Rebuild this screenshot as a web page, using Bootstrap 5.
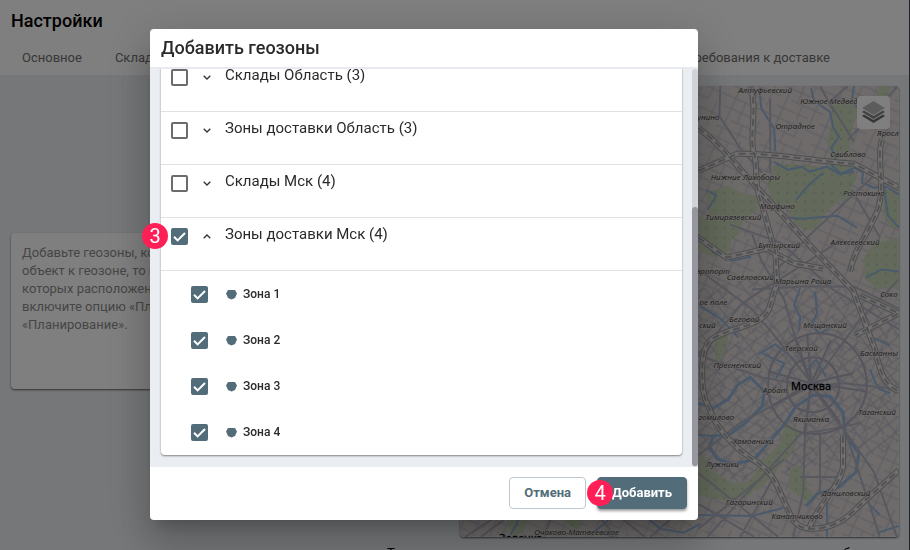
<!DOCTYPE html>
<html lang="ru">
<head>
<meta charset="utf-8">
<meta name="viewport" content="width=device-width, initial-scale=1">
<title>Настройки</title>
<link href="https://cdn.jsdelivr.net/npm/bootstrap@5.3.0/dist/css/bootstrap.min.css" rel="stylesheet">
<style>
  body { font-family: Roboto, "Liberation Sans", sans-serif; font-size: 13px; line-height: 18px; background: #ebeef2; overflow: hidden; height: 100vh; }
  .page { border-right: 1px solid #445; min-height: 100vh; }
  .page-head { padding: 10px 11px 8px; height: 75px; }
  .page-title { font-size: 18px; line-height: 22px; font-weight: 500; color: #000; }
  .tabs { gap: 33px; padding: 0 68px 0 11px; margin-top: 17px; }
  .tabs a { color: #6e6e6e; }
  .content-area { padding: 11px 10px 0 11px; gap: 10px; }
  .content-area > * { flex: 0 1 50%; min-width: 0; }
  .soft-card { border: 0; border-radius: 4px; box-shadow: 0 1px 2px rgba(0,0,0,.6); }
  .hint { min-height: 156px; padding: 11px; color: #8c8c8c; white-space: nowrap; overflow: hidden; }
  .map-card { overflow: hidden; position: relative; }
  .map-card svg.city { display: block; width: 100%; height: auto; }
  .layers { position: absolute; top: 10px; right: 9px; width: 33px; height: 33px; padding: 0; background: #fff; border-radius: 4px; line-height: 0; }
  .layers:hover { background: #fff; }
  .note { padding: 7px 12px 0 387px; color: #000; white-space: nowrap; overflow: hidden; }

  .modal-backdrop { --bs-backdrop-opacity: .5; }
  .zones-dialog { max-width: none; margin: 29px 212px 29px 150px; }
  .modal-content { border: 0; border-radius: 4px; box-shadow: 0 11px 15px -7px rgba(0,0,0,.2), 0 24px 38px 3px rgba(0,0,0,.14), 0 9px 46px 8px rgba(0,0,0,.12); }
  .modal-header { padding: 8px 11px; border-bottom: 2px solid #e8eaef; }
  .modal-title { font-size: 18px; line-height: 22px; font-weight: 500; color: #2a2a2a; }
  .zones-scroll { height: calc(100vh - 152px); overflow: hidden; background: #eaedf1; padding: 0 16px 12px 11px; position: relative; }
  .track { position: absolute; top: 0; bottom: 0; right: 0; width: 6px; border-radius: 4px; background: #cfd2d7; }
  .thumb { position: absolute; bottom: 1px; right: 0; width: 6px; height: 65%; border-radius: 4px; background: #96979e; }
  .zones { background: #fff; color: #2a2a2a; flex-shrink: 0; box-shadow: 0 1px 2px rgba(0,0,0,.45); }
  .group { height: 53px; padding: 6px 10px; border-bottom: 1px solid #dfe1e4; gap: 10px; font-size: 15px; line-height: 20px; }
  .zone { height: 46px; padding: 0 30px; gap: 18px; font-size: 12px; font-weight: 500; }
  .form-check-input { width: 17px; height: 17px; margin: 0; border: 2px solid #6c6c6c; border-radius: 2px !important; flex-shrink: 0; }
  .group .form-check-input { margin-top: 4px; }
  .form-check-input:checked { border-color: #526d79; background-color: #526d79; background-size: 17px 17px; background-image: url("data:image/svg+xml,%3Csvg xmlns='http://www.w3.org/2000/svg' viewBox='0 0 17 17'%3E%3Cpath d='M3 8.8l3.6 3.6L14 5' fill='none' stroke='%23fff' stroke-width='2'/%3E%3C/svg%3E"); }
  .chevron { width: 17px; height: 17px; padding: 0; margin: 4px 0 0; border: 0; background: none; line-height: 0; }
  .pentagon { margin-right: 6px; }
  .modal-footer { padding: 10px 11px 11px; gap: 11px; border: 0; background: #fff; }
  .modal-footer > * { margin: 0; }
  .action { font-size: 13px; line-height: 18px; font-weight: 700; padding: 6px 14px; border-radius: 4px; position: relative; }
  .cancel { color: #526d79; border-color: #bcc7cf; background: #fff; }
  .add, .add:hover { color: #fff; background: #526d79; border-color: #526d79; box-shadow: 0 2px 3px rgba(0,0,0,.4); }
  .step { position: absolute; width: 26px; height: 26px; border-radius: 50%; background: #ff1f57; color: #fff; font: 400 20px/26px Roboto, sans-serif; text-align: center; }
  .step-four { left: -11px; top: 2px; }
  .step-three { left: -8px; bottom: 271px; }
</style>
</head>
<body class="modal-open">
<div class="page">
  <header class="page-head bg-white">
    <h1 class="page-title mb-0">Настройки</h1>
    <nav class="tabs d-flex text-nowrap" aria-label="Разделы">
      <a class="text-decoration-none" href="#main">Основное</a>
      <a class="text-decoration-none" href="#stores">Склады</a>
      <a class="text-decoration-none ms-auto" href="#delivery">Требования к доставке</a>
    </nav>
  </header>
  <main>
    <div class="content-area d-flex align-items-center">
      <section class="card soft-card hint">
        <p class="mb-0">Добавьте геозоны, которые нужны. Если привязать<br>объект к геозоне, то на его заявки выйдут сотрудники,<br>которых расположение адресов позволяет. Для учёта<br>включите опцию «Планировать по геозонам» в<br>«Планирование».</p>
      </section>
      <section class="card soft-card map-card" aria-label="Карта">
        <svg class="city" viewBox="459 86 440 452">
          <defs>
            <pattern id="streetsA" width="47" height="43" patternUnits="userSpaceOnUse" patternTransform="rotate(24)">
              <path d="M0 6H47M0 17H29M12 28H47M0 38H34M7 0V43M18 6V28M29 0V17M38 17V43M24 28V43" fill="none" stroke="#bab8c4" stroke-width="1"/>
            </pattern>
            <pattern id="streetsB" width="31" height="37" patternUnits="userSpaceOnUse" patternTransform="rotate(-38)">
              <path d="M0 5H31M0 13H20M8 22H31M0 31H31M5 0V37M14 5V22M22 0V13M26 22V37" fill="none" stroke="#b2b1c0" stroke-width="1"/>
            </pattern>
            <pattern id="trees" width="9" height="9" patternUnits="userSpaceOnUse">
              <rect width="9" height="9" fill="#c6d4b6"/><circle cx="4" cy="4" r=".8" fill="#92ac83"/>
            </pattern>
          </defs>
          <path fill="#dcd7d4" d="M459 86h440v452H459z"/>
          <path fill="url(#streetsA)" d="M459 86h440v452H459z"/>
          <path fill="url(#streetsB)" d="M698 290L790 270L899 310V450L800 470L698 490z"/>
          <g fill="url(#trees)">
            <path d="M773 166l19-2 24 3 36-2 5 13-6 10 3 10-17 4-12 12-8 14-12 3-9-6-9-14-14-8-6-18z"/>
            <path d="M706 192l22-6 12 7 16 3 2 14-14 9-6 16-18 14-8-12-4-24z"/>
            <path d="M698 217l22 6 12 12-3 17-18 6-13-8z"/>
            <path d="M872 246l27-9v51l-22 2-14-13 1-19z"/>
            <path d="M884 190l15-3v42l-10-3-6-12z"/>
            <path d="M786 424l15 8-8 19-22 27-14 14-10-5 14-24 18-17z"/>
            <path d="M700 450l10 20 22 14 24-2-5 14-23 6-30-6z"/>
            <path d="M833 104l16-5 15 10-11 15-4 26-15 12-8-20 5-15z"/>
            <path d="M790 470l10-4 7 22 8 9-8 6-19-14z"/>
            <path d="M714 340l14-6-2 18-10 15z"/>
            <path d="M508 520h19l-4 14-14 2z"/>
            <path d="M560 520h24l-8 12z"/>
            <path d="M880 86h12l-8 22-10-6z"/>
          </g>
          <g fill="none" stroke="#94b4da" stroke-width="2" stroke-linejoin="round">
            <path d="M759 88l2 20 13 21 1 22M811 88l3 13 16 11 3 15 6 10-8 11 5 9-4 9 9 8 14-6 8 5-1 10 12 5 13-1 12 8"/>
            <path d="M774 162l14 8 14-3 7 5 18-5 12 7 15-2M796 200l13-15 14-12M706 190l10 6-9 14M789 218l13 1 35-3 20 12"/>
            <path d="M698 235l15 18 20 8 18-4M854 86l-2 14 14 20M800 288l-6 18 6 11-1 14M815 292l2 22-6 12 9 8 16-10M884 186l4 30 11 12"/>
            <path d="M698 404l15 5 15-9 10-15 12-7 14 14-2 15-17 17-15 11-17 2-4 11 8 12 16 5 20-4 9-10 21-24 13-20 17-11 17 1 13 16 2 23 14 18-3 19-17 15-22 7-11 12" stroke-width="3"/>
            <path d="M698 436l15 1M827 500v38M698 516l54 1 31-8M877 534l22-7M870 506l10 10M762 354l22 10-8 15M870 370l8 19 12 5M806 372l10-12 10 18"/>
            <path d="M609 520l-14 12 18 6M700 525l-17 9-23-4-12-10M518 520l-8 16M866 278l15-8 18 2M890 346l-20-9M700 307l20 12 18 19M758 355l17-10 13 10"/>
          </g>
          <g fill="none" stroke="#b1b0bf" stroke-width="2">
            <path d="M698 270l54 40 22 26 38 49 62 88 23 65M752 235l9 26 23 39 16 56 11 31M899 280l-39 40-49 67M899 390l-55-6-33 3-50-9-63-22M811 387l-6 46-2 61-10 44M811 387l-70 36-43 33M811 387l35 47 34 104M698 505l56 33M698 474l80 64M698 530l86-70M707 538l95-105M740 538l32-57"/>
            <path d="M770 99v74M720 86l-1 30 22 34 21 23M854 142l-25-40 19-16M898 86l-50 54M875 175l-65 60-40 42M820 86l14 26M852 190l28 48M730 225l50 18 53 47 66 40M698 355l45-52 55-35 44-28M752 290l50-3 52 0 45 22M820 434v60M803 434l17-2 40-8M800 478h40"/>
            <path d="M464 538l28-18M480 538l24-18M600 520l16 18M622 520l22 18M650 538l20-18M550 520l-7 18"/>
          </g>
          <g fill="none" stroke="#acabba" stroke-width="2">
            <path d="M768 385c0-28 20-48 47-51 32-2 51 24 52 50 0 30-24 50-52 51-28 0-47-20-47-50z"/>
            <path d="M787 388c0-18 10-29 25-30 17 0 27 13 27 29 0 15-11 26-27 26-15 0-25-10-25-25z"/>
            <path d="M811 384l-15-44M811 384l20-43M811 384l42-10M811 384l29 39M811 384l-7 50M811 384l-40 23M811 384l-43-12M811 384l-4-50M811 384l55 8"/>
          </g>
          <defs>
            <path id="rail" fill="none" d="M698 128c26 20 35 35 51 51l60 66 44 46 22 59c6 28 12 37 24 42M750 86c8 26-2 52 4 68 4 16-1 30 8 52l13 46 2 31-8 26c-7 20-46 19-60 33-11 14-7 49-4 58 8 20 12 29 28 45 20 20 34 18 45 44 14 32 16 41 34 41s34-9 46-22l41-37M698 171l39-17c35-1 83 8 117 10l45 24M882 140c-6 19 4 44-4 70-8 21-24 40-28 62M698 238l28 20 40-9 28 15 29 5M860 296l39 18-44 22M843 437v30c-2 20-24 37-34 62"/>
          </defs>
          <use href="#rail" stroke="#9d9da0" stroke-width="6"/>
          <use href="#rail" stroke="#e0dddc" stroke-width="4"/>
          <use href="#rail" stroke="#a5a4a8" stroke-width="2" stroke-dasharray="7 4"/>
          <g font-family="'Open Sans','Noto Sans',sans-serif" font-style="italic" font-size="8" fill="#333" text-anchor="middle" stroke="#e4dfdd" stroke-width="1" paint-order="stroke">
            <text x="765" y="93">Алтуфьевский</text><text x="800" y="104" text-anchor="start">Южное Медведк</text>
            <text x="708" y="120">унино</text><text x="795" y="129">Отрадное</text><text x="888" y="136">Яросл</text>
            <text x="848" y="157">Свиблово</text><text x="745" y="180">Нижние Лихоборы</text><text x="864" y="196">Ростокино</text>
            <text x="777" y="209">Марфино</text><text x="733" y="220">Тимирязевский</text><text x="779" y="248">Бутырский</text>
            <text x="855" y="245">Алексеевский</text><text x="713" y="274">эропорт</text><text x="750" y="281">Савёловский</text>
            <text x="803" y="285">Марьина Роща</text><text x="713" y="306">ое поле</text><text x="889" y="298">Соко</text>
            <text x="744" y="323">Беговой</text><text x="825" y="329">Мещанский</text><text x="707" y="329">ский</text>
            <text x="801" y="352">Тверской</text><text x="879" y="357">Басманны</text><text x="737" y="369">Пресненский</text>
            <text x="775" y="394">Арбат</text><text x="877" y="416">Таганский</text><text x="716" y="421">гомилово</text>
            <text x="811" y="423">Якиманка</text><text x="753" y="445">Хамовники</text><text x="722" y="468">Лужники</text>
            <text x="846" y="497">Даниловский</text><text x="749" y="506">Гагаринский</text><text x="797" y="520">Канатчиково</text>
            <text x="576" y="536">Очаково-Матвеевское</text>
          </g>
          <g font-family="'Noto Sans','Open Sans',sans-serif" font-size="11" fill="#000" stroke="#000" stroke-width=".3" text-anchor="middle">
            <text x="811" y="391">Москва</text><text x="520" y="543">Зеленка</text>
          </g>
        </svg>
        <button class="btn layers" type="button" aria-label="Слои">
          <svg width="25" height="25" viewBox="0 0 25 25"><path d="M1 16l11.500 7L24 16l-2-1.500-9.500 5.500L3 14.500z" fill="#6e6e6e"/><path d="M1 12l11.500 7L24 12l-2-1.500-9.500 5.500L3 10.500z" fill="#858585"/><path d="M12.500 1L24 8l-11.500 7L1 8z" fill="#b9b9b9"/></svg>
        </button>
      </section>
    </div>
    <p class="note mb-0">Точкам нужную геозону можно назначить позже, после создания новых объектов и зон</p>
  </main>
</div>

<div class="modal-backdrop show"></div>
<div class="modal d-block" tabindex="-1" role="dialog" aria-labelledby="dialogTitle">
  <div class="modal-dialog zones-dialog">
    <div class="modal-content">
      <div class="modal-header"><h2 class="modal-title" id="dialogTitle">Добавить геозоны</h2></div>
      <div class="zones-scroll d-flex flex-column justify-content-end">
        <div class="zones rounded-1">
          <div class="group d-flex align-items-start"><input class="form-check-input" type="checkbox" id="g1"><button class="chevron" type="button" aria-label="Развернуть"><svg width="8" height="5" viewBox="0 0 8 5"><path d="M.7.7L4 4 7.300.7" fill="none" stroke="#333" stroke-width="1.300"/></svg></button><label for="g1">Склады Область (3)</label></div>
          <div class="group d-flex align-items-start"><input class="form-check-input" type="checkbox" id="g2"><button class="chevron" type="button" aria-label="Развернуть"><svg width="8" height="5" viewBox="0 0 8 5"><path d="M.7.7L4 4 7.300.7" fill="none" stroke="#333" stroke-width="1.300"/></svg></button><label for="g2">Зоны доставки Область (3)</label></div>
          <div class="group d-flex align-items-start"><input class="form-check-input" type="checkbox" id="g3"><button class="chevron" type="button" aria-label="Развернуть"><svg width="8" height="5" viewBox="0 0 8 5"><path d="M.7.7L4 4 7.300.7" fill="none" stroke="#333" stroke-width="1.300"/></svg></button><label for="g3">Склады Мск (4)</label></div>
          <div class="group d-flex align-items-start"><input class="form-check-input" type="checkbox" id="g4" checked><button class="chevron" type="button" aria-label="Свернуть"><svg width="8" height="5" viewBox="0 0 8 5"><path d="M.7 4.300L4 1l3.300 3.300" fill="none" stroke="#333" stroke-width="1.300"/></svg></button><label for="g4">Зоны доставки Мск (4)</label></div>
          <div class="zone d-flex align-items-center"><input class="form-check-input" type="checkbox" id="z1" checked><label for="z1"><svg class="pentagon" width="11" height="11" viewBox="0 0 11 11"><path d="M2 1h7l2 3.500-2 4.500-3.500 1.500L2 9 0 4.500z" fill="#526d79"/></svg>Зона 1</label></div>
          <div class="zone d-flex align-items-center"><input class="form-check-input" type="checkbox" id="z2" checked><label for="z2"><svg class="pentagon" width="11" height="11" viewBox="0 0 11 11"><path d="M2 1h7l2 3.500-2 4.500-3.500 1.500L2 9 0 4.500z" fill="#526d79"/></svg>Зона 2</label></div>
          <div class="zone d-flex align-items-center"><input class="form-check-input" type="checkbox" id="z3" checked><label for="z3"><svg class="pentagon" width="11" height="11" viewBox="0 0 11 11"><path d="M2 1h7l2 3.500-2 4.500-3.500 1.500L2 9 0 4.500z" fill="#526d79"/></svg>Зона 3</label></div>
          <div class="zone d-flex align-items-center"><input class="form-check-input" type="checkbox" id="z4" checked><label for="z4"><svg class="pentagon" width="11" height="11" viewBox="0 0 11 11"><path d="M2 1h7l2 3.500-2 4.500-3.500 1.500L2 9 0 4.500z" fill="#526d79"/></svg>Зона 4</label></div>
        </div>
        <div class="track"></div><div class="thumb"></div>
      </div>
      <div class="modal-footer">
        <button class="btn action cancel" type="button">Отмена</button>
        <button class="btn action add" type="button">Добавить<span class="step step-four">4</span></button>
      </div>
      <span class="step step-three">3</span>
    </div>
  </div>
</div>
<script src="https://cdn.jsdelivr.net/npm/bootstrap@5.3.0/dist/js/bootstrap.bundle.min.js"></script>
</body>
</html>
